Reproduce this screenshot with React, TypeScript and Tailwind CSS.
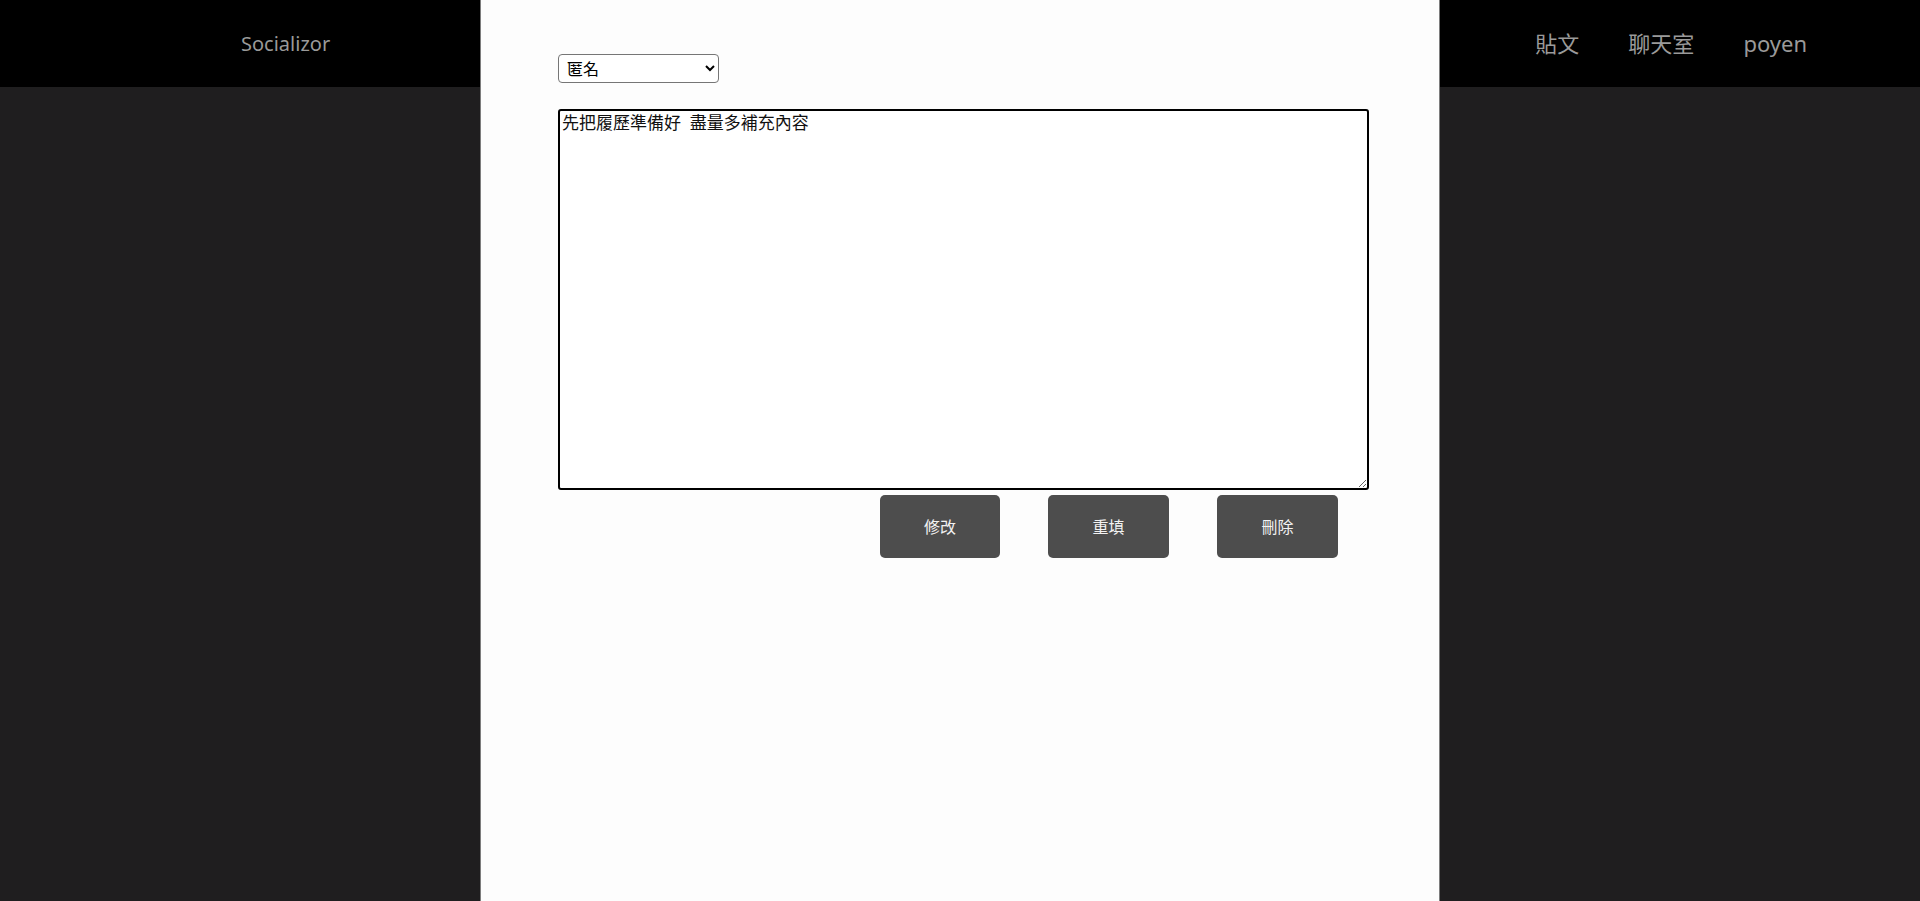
import { useState } from "react";

const cjk = "font-['Noto_Sans','Noto_Sans_CJK_TC',sans-serif]";

function App() {
  const [content, setContent] = useState("先把履歷準備好  盡量多補充內容");

  return (
    <div className={`min-h-screen bg-[#1f1e1f] ${cjk}`}>
      <header className="h-[87px] bg-black flex items-center justify-between pl-[241px] pr-[113px]">
        <span className="text-[20px] text-[#9a9a9a]">Socializor</span>
        <nav className="flex items-center gap-[49px] text-[22px] text-[#9a9a9a]">
          <span>貼文</span>
          <span>聊天室</span>
          <span>poyen</span>
        </nav>
      </header>

      <div className="fixed inset-y-0 left-[480px] w-[960px] bg-[#fdfdfd] border-l border-r border-[#7d7d7d] pt-[54px] pl-[77px]">
        <select className="block w-[161px] h-[29px] pl-[4px] pr-[6px] border border-[#767676] rounded-[4px] bg-white text-[16px] leading-[20px] text-black">
          <option>匿名</option>
          <option>公開</option>
        </select>

        <textarea
          value={content}
          onChange={(e) => setContent(e.target.value)}
          className="block mt-[26px] w-[811px] h-[381px] border-2 border-black rounded-[3px] bg-white p-[2px] text-[17px] leading-[20px] text-[#111] outline-none"
        />

        <div className="flex w-[811px] justify-end gap-[48px] pr-[31px] mt-[5px]">
          <button className="w-[120px] h-[63px] rounded-[5px] border-0 bg-[#4d4d4d] text-[16px] text-[#f2f2f2] cursor-pointer">修改</button>
          <button className="w-[121px] h-[63px] rounded-[5px] border-0 bg-[#4d4d4d] text-[16px] text-[#f2f2f2] cursor-pointer">重填</button>
          <button className="w-[121px] h-[63px] rounded-[5px] border-0 bg-[#4d4d4d] text-[16px] text-[#f2f2f2] cursor-pointer">刪除</button>
        </div>
      </div>
    </div>
  );
}

export default App;
